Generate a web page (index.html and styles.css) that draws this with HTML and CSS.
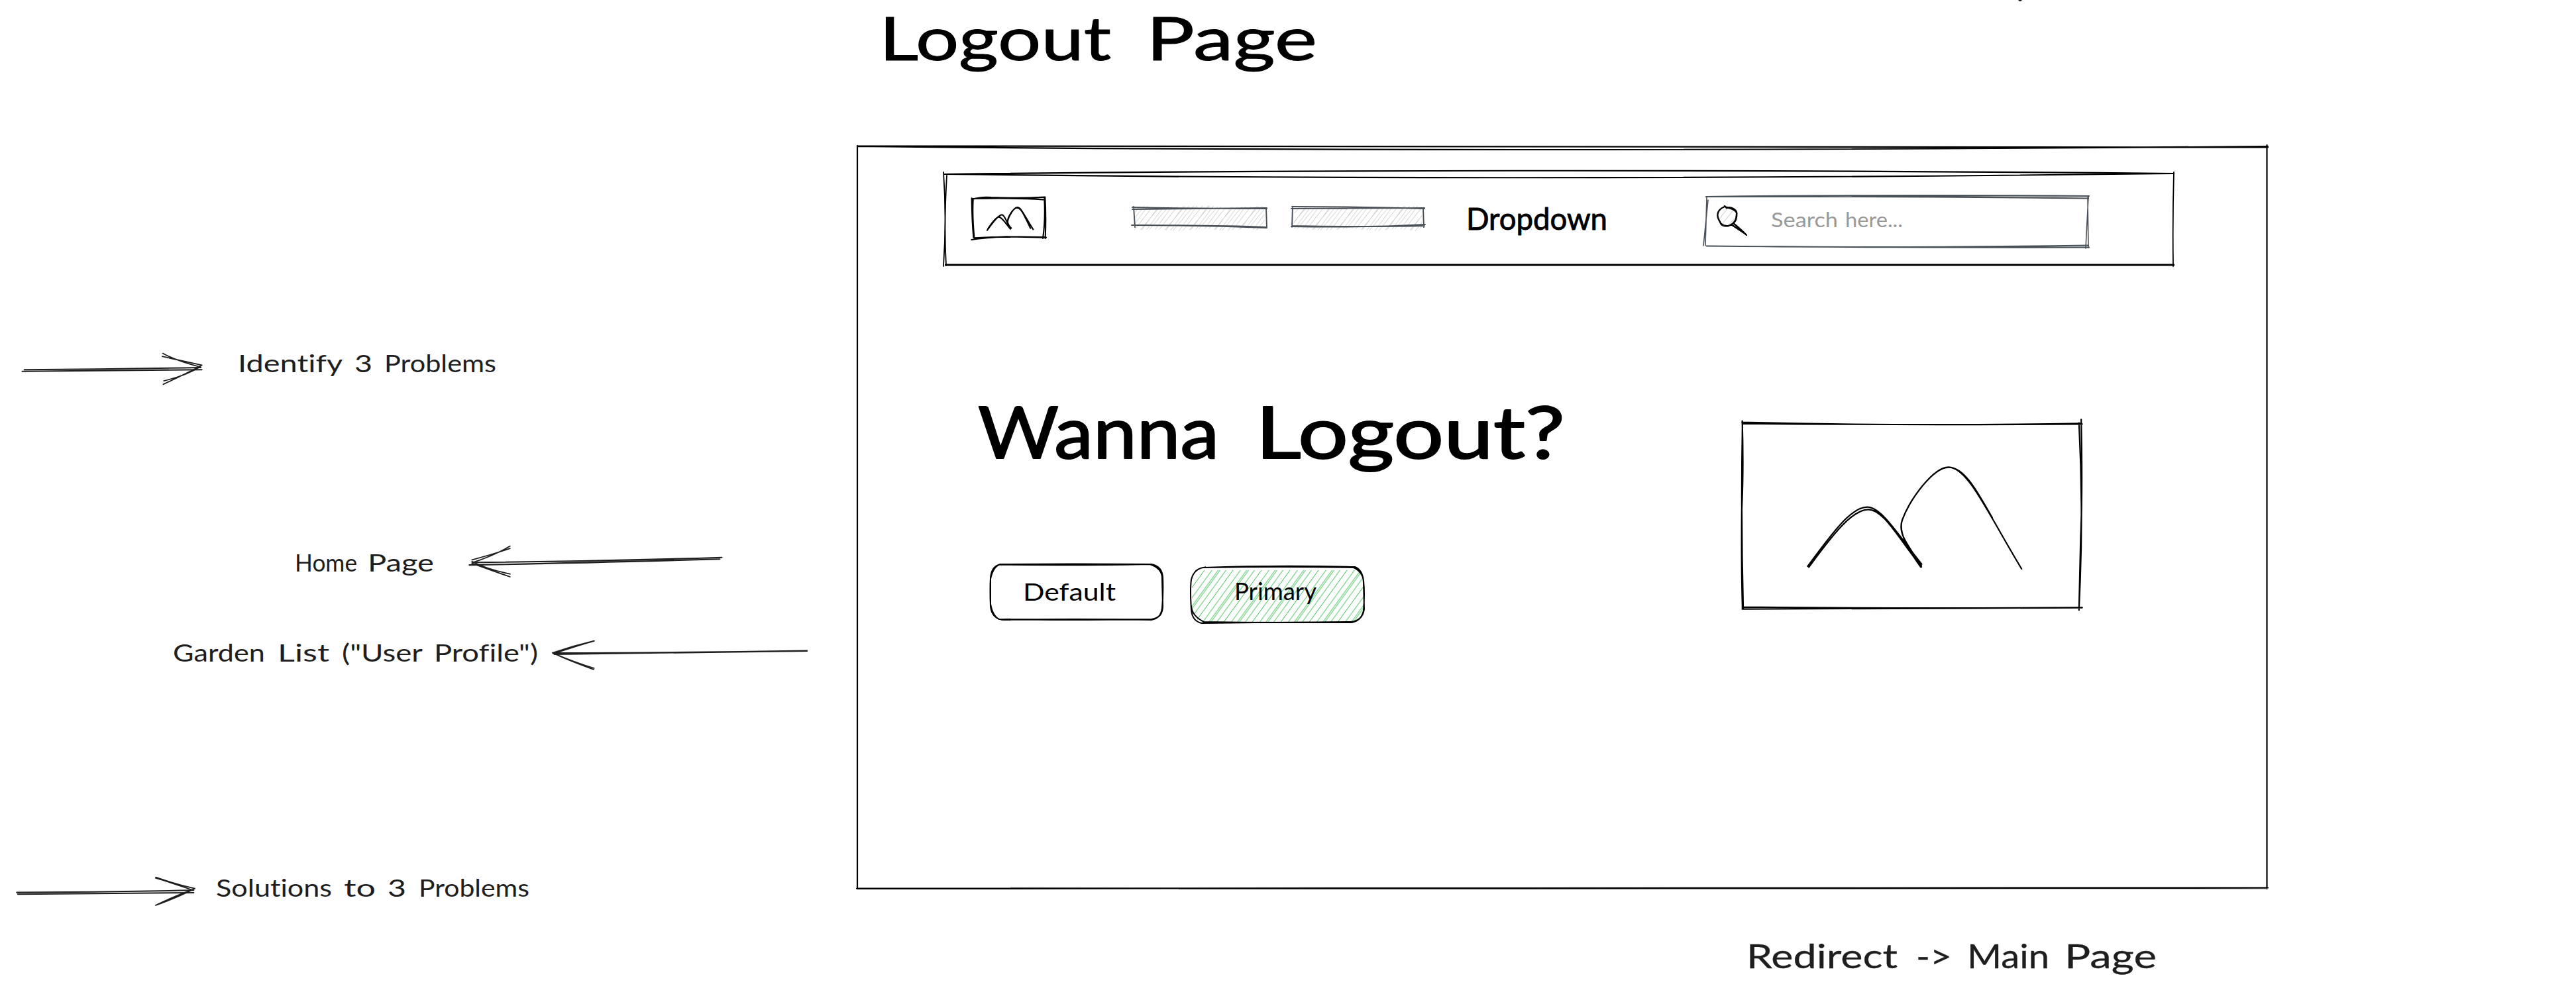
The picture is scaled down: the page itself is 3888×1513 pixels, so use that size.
FILE: index.html
```html
<!DOCTYPE html>
<html lang="en">
<head>
<meta charset="utf-8">
<title>Logout Page</title>
<link rel="stylesheet" href="styles.css">
</head>
<body>
<main class="board">
  <svg class="item speck" viewBox="0 0 8 3"><path d="M1 0H7L5 2H3Z"/></svg>

  <svg class="item title ink" viewBox="1320 0 680 140"><text y="91"><tspan x="1327" textLength="350" lengthAdjust="spacingAndGlyphs">Logout</tspan> <tspan x="1730" textLength="258" lengthAdjust="spacingAndGlyphs">Page</tspan></text></svg>

  <svg class="item arrow arrow-identify" viewBox="30 140 360 150" preserveAspectRatio="none">
    <path d="M42 226Q200 223 382 219M46 219Q220 216 380 210"/>
    <path class="thin" d="M308 150Q335 183 380 208M307 163Q340 179 382 200M309 281Q350 238 382 200M310 266Q350 246 378 208"/>
  </svg>
  <svg class="item label label-identify" viewBox="350 500 410 90"><text y="562"><tspan x="359" textLength="157" lengthAdjust="spacingAndGlyphs">Identify</tspan> <tspan x="535" textLength="27" lengthAdjust="spacingAndGlyphs">3</tspan> <tspan x="580" textLength="169" lengthAdjust="spacingAndGlyphs">Problems</tspan></text></svg>

  <svg class="item label label-home" viewBox="440 800 230 90"><text y="863"><tspan x="445" textLength="94" lengthAdjust="spacingAndGlyphs">Home</tspan> <tspan x="555" textLength="100" lengthAdjust="spacingAndGlyphs">Page</tspan></text></svg>
  <svg class="item arrow arrow-home" viewBox="880 955 500 150" preserveAspectRatio="none">
    <path d="M888 1045Q1100 1037 1362 1020M895 1034Q1130 1030 1366 1013"/>
    <path class="thin" d="M893 1023Q935 998 965 975M893 1036Q940 1000 965 965M893 1030Q920 1062 965 1083M893 1038Q930 1068 965 1095"/>
  </svg>

  <svg class="item label label-garden" viewBox="250 940 580 90"><text y="999"><tspan x="261" textLength="139" lengthAdjust="spacingAndGlyphs">Garden</tspan> <tspan x="419" textLength="78" lengthAdjust="spacingAndGlyphs">List</tspan> <tspan x="516" textLength="121" lengthAdjust="spacingAndGlyphs">("User</tspan> <tspan x="655" textLength="157" lengthAdjust="spacingAndGlyphs">Profile")</tspan></text></svg>
  <svg class="item arrow arrow-garden" viewBox="1040 1355 500 140" preserveAspectRatio="none">
    <path d="M1050 1422Q1280 1415 1528 1408M1052 1417Q1280 1416 1528 1407"/>
    <path class="thin" d="M1046 1416Q1085 1386 1125 1365M1048 1420Q1090 1388 1125 1366M1046 1416Q1090 1458 1125 1481M1050 1420Q1085 1456 1124 1486"/>
  </svg>

  <svg class="item arrow arrow-solutions" viewBox="20 365 350 145" preserveAspectRatio="none">
    <path d="M30 442Q190 440 352 432M32 450Q190 446 352 443"/>
    <path class="thin" d="M283 373Q320 405 354 424M283 377Q315 400 350 431M283 500Q325 462 354 424M285 497Q330 445 350 430"/>
  </svg>
  <svg class="item label label-solutions" viewBox="320 1290 490 90"><text y="1354"><tspan x="326" textLength="175" lengthAdjust="spacingAndGlyphs">Solutions</tspan> <tspan x="519" textLength="48" lengthAdjust="spacingAndGlyphs">to</tspan> <tspan x="585" textLength="28" lengthAdjust="spacingAndGlyphs">3</tspan> <tspan x="632" textLength="167" lengthAdjust="spacingAndGlyphs">Problems</tspan></text></svg>

  <section class="item frame">
    <svg class="outline" viewBox="1294 221 2128 1121">
      <path d="M1294 220.5Q2250 222 3423 222.500M1294 221Q2250 231 3423 221M3421.500 219V1342M3423 1340.500Q2300 1341 1293 1341.500M1294 1342Q2300 1341 3422 1341M1294 220V1342"/>
    </svg>
    <nav class="navbar">
      <svg class="outline" viewBox="1424 257 1857 146">
        <path d="M1425 263Q2280 253 3281 262M1426 263Q2280 274 3281 262M1427 399.500H3281M1427 400.500H3281"/>
        <path class="fine" d="M1424 260Q1429 330 1424 402M1429 265Q1424.500 340 1428 401M3281 260Q3279 330 3280 402"/>
      </svg>
      <svg class="logo" viewBox="130 165 360 210">
        <path d="M141 178Q142 280 149 355M147 185Q143 260 152 352M141 184Q180 170 230 174Q350 180 473 173M145 180Q330 176 465 184M473 175Q478 260 474 360M470 180Q475 280 463 360M140 366Q200 356 300 352L478 356M152 358Q300 350 472 354"/>
        <path d="M211 323Q260 253 278 253C292 253 300 298 320 313M214 317Q250 263 264 263C278 263 300 300 316 317M307 295C294 280 330 220 347 219C365 219 375 250 419 319M304 290C300 265 330 222 347 221C366 222 380 260 407 314"/>
      </svg>
      <svg class="link" viewBox="1700 308 220 44">
        <defs><pattern id="grey-hatch" width="37" height="60" patternUnits="userSpaceOnUse" patternTransform="skewX(-38)"><path d="M2 0L4 60M10 0L7 60M14 0L17 60M23 0L22 60M31 0L34 60M34 0L31 60"/></pattern></defs>
        <path class="hatch" d="M1713 313L1732 311L1735 313L1770 312L1820 310L1850 313L1908 311L1909 343L1897 348L1880 345L1850 349L1820 345L1780 349L1740 346L1712 348Z"/>
        <path d="M1709 313Q1800 315 1912 315M1709 316Q1800 315 1912 314M1711 312L1713 343M1911 314L1912 344M1708 340Q1810 340 1912 344M1710 340Q1840 340 1911 343"/>
      </svg>
      <svg class="link" viewBox="1940 308 220 44">
        <path class="hatch" d="M1955 313L1990 313L2030 311L2070 314L2110 311L2145 311L2147 343L2136 349L2110 345L2080 349L2040 345L2000 348L1952 345Z"/>
        <path d="M1950 312Q2050 312 2150 315M1949 315Q2060 314 2150 314M1951 312L1950 343M2148 314L2149 343M1949 342Q2060 344 2151 339M1950 341Q2060 343 2150 341"/>
      </svg>
      <svg class="dropdown ink" viewBox="2210 290 220 80"><text x="2213" y="347" textLength="213" lengthAdjust="spacingAndGlyphs">Dropdown</text></svg>
      <svg class="search" viewBox="2565 280 600 100">
        <path d="M2575 297Q2850 294 3153 296M2575 297Q2850 296 3152 299.500M2576 371.500Q2850 375 3152 370.500M2576 371.500Q2850 374 3153 373.500"/>
        <path class="fine" d="M2576 297L2574 371M2578 302Q2574 340 2571 371M3152 297L3148 375M3151 298L3152 374"/>
        <path class="glass-hatch" d="M2607 315L2594 332M2617 316L2598 340M2621 327L2608 341"/>
        <path class="glass" d="M2603 311L2606 314C2614 311 2623 318 2621 324L2620 332Q2617 338 2612 340C2604 343 2598 341 2596 335C2590 326 2591 317 2603 312M2606 313Q2619 316 2621 321Q2623 335 2609 341Q2602 342 2598 338M2613 339L2634 353M2616 337Q2625 344 2636 355"/>
        <text y="342.500"><tspan x="2673" textLength="101" lengthAdjust="spacingAndGlyphs">Search</tspan> <tspan x="2785" textLength="87" lengthAdjust="spacingAndGlyphs">here...</tspan></text>
      </svg>
    </nav>
    <div class="hero">
      <div class="prompt">
        <svg class="heading ink" viewBox="1470 600 900 150"><text y="692"><tspan x="1476" textLength="364" lengthAdjust="spacingAndGlyphs">Wanna</tspan> <tspan x="1895" textLength="467" lengthAdjust="spacingAndGlyphs">Logout?</tspan></text></svg>
        <div class="actions">
          <svg class="button ink" viewBox="1485 845 280 100">
            <path d="M1512 852Q1620 851 1738 852Q1754 855 1755 872Q1756 895 1754 918Q1752 934 1738 936Q1620 934 1512 936Q1497 933 1495 916Q1494 890 1495 872Q1497 853 1512 852ZM1508 852.500Q1650 854 1735 852Q1755 858 1754 875L1755 915Q1755 933 1738 935Q1600 937 1508 935Q1498 930 1495 912V874Q1500 851 1514 852"/>
            <text x="1544" y="907" textLength="140" lengthAdjust="spacingAndGlyphs">Default</text>
          </svg>
          <svg class="button ink" viewBox="1787 845 280 100">
            <defs><pattern id="green-hatch" width="43" height="1000" patternUnits="userSpaceOnUse" patternTransform="skewX(-36)"><path d="M3 0L4 1000M14 0L13 1000M16 0V1000M25 0V1000M36 0L35.500 1000"/></pattern></defs>
            <path class="green" d="M1814 861H2052L2058 880V915Q2055 936 2042 941H1815Q1801 935 1799 918V882Z"/>
            <path d="M1818 857Q1925 853 2045 856Q2056 860 2058 877Q2060 895 2058 922Q2055 937 2040 940Q1940 939 1814 941Q1799 938 1798 920Q1796 890 1798 875Q1803 857 1820 856.500ZM1818 857Q1930 855 2043 857Q2058 864 2058 880L2059 920Q2056 938 2038 939Q1930 941 1817 939Q1799 930 1798 915"/>
            <text x="1863" y="906" textLength="124" lengthAdjust="spacingAndGlyphs">Primary</text>
          </svg>
        </div>
      </div>
      <svg class="picture" viewBox="0 0 1568 1020" preserveAspectRatio="none">
        <path d="M79 83Q750 101 1460 88M83 89Q780 96 1467 91M80 77Q86 300 78 480Q76 750 81 929M81 80Q74 500 84 927M1463 70Q1469 400 1461 600L1454 934M1454 86Q1471 450 1459 800L1454 930M80 920Q780 927 1467 922M80 929Q700 923 1467 923"/>
        <path d="M347 735C450 580 525 467 590 467C650 467 720 600 812 725M352 739C450 590 530 478 594 478C655 478 710 595 811 738M811 732C745 625 715 580 733 525C765 430 860 286 922 286C1000 286 1080 490 1220 747M808 738C745 640 718 575 733 525C765 428 860 288 922 287C990 287 1045 410 1100 515M757 650L811 738"/>
      </svg>
    </div>
  </section>

  <svg class="item redirect" viewBox="2630 1400 640 100"><text y="1462"><tspan x="2636" textLength="228" lengthAdjust="spacingAndGlyphs">Redirect</tspan> <tspan x="2892" textLength="54" lengthAdjust="spacingAndGlyphs">-&gt;</tspan> <tspan x="2969" textLength="124" lengthAdjust="spacingAndGlyphs">Main</tspan> <tspan x="3116" textLength="139" lengthAdjust="spacingAndGlyphs">Page</tspan></text></svg>
</main>
</body>
</html>
```
FILE: styles.css
```css
* { box-sizing: border-box; }
body {
  margin: 0;
  background: #fff;
  font-family: Lato, "Open Sans", sans-serif;
  font-variant-ligatures: none;
}
.board {
  position: relative;
  width: 3888px;
  height: 1513px;
  overflow: hidden;
}
svg {
  display: block;
  flex: none;
  overflow: visible;
}
text {
  fill: #1e1e1e;
  stroke: #1e1e1e;
  stroke-width: 0;
  stroke-linejoin: round;
}
path {
  fill: none;
  stroke: #000;
  stroke-width: 2.2px;
  stroke-linecap: round;
  vector-effect: non-scaling-stroke;
}
.ink text { fill: #000; stroke: #000; }
.fine { stroke-width: 1.8px; }

/* Notes and arrows placed freely on the board */
.item { position: absolute; }
.speck { left: 3045px; top: 0; width: 8px; height: 3px; }
.speck path { fill: #1e1e1e; stroke: none; }
.title { left: 1320px; top: 0; width: 680px; height: 140px; font-size: 92px; }
.title text { stroke-width: 1px; }
.redirect { left: 2630px; top: 1400px; width: 640px; height: 100px; font-size: 51px; }
.redirect text { stroke-width: .3px; }
.label { font-size: 37px; height: 90px; }
.label-identify { left: 350px; top: 500px; width: 410px; }
.label-home { left: 440px; top: 800px; width: 230px; }
.label-garden { left: 250px; top: 940px; width: 580px; }
.label-solutions { left: 320px; top: 1290px; width: 490px; }
.arrow path { stroke: #1e1e1e; stroke-width: 2.1px; }
.arrow .thin { stroke-width: 1.8px; }
.arrow-identify { left: 24px; top: 530px; width: 287px; height: 53.600px; }
.arrow-home { left: 702px; top: 821px; width: 398.700px; height: 53.600px; }
.arrow-garden { left: 829px; top: 964px; width: 398.700px; height: 50px; }
.arrow-solutions { left: 16.600px; top: 1321.700px; width: 290.200px; height: 48.300px; }

/* Wireframe */
.frame {
  left: 1294px;
  top: 221px;
  width: 2128px;
  height: 1121px;
  padding-top: 36px;
}
.outline {
  position: absolute;
  inset: 0;
  width: 100%;
  height: 100%;
}
.navbar {
  position: relative;
  display: flex;
  align-items: center;
  width: 1857px;
  height: 146px;
  margin-left: 130px;
  padding-left: 39px;
}
.logo { width: 120px; height: 70px; margin-right: 117px; }
.logo path { stroke-width: 2.1px; }
.link { width: 220px; height: 44px; margin-right: 20px; }
.link path { stroke: #495057; stroke-width: 1.9px; }
.link .hatch { fill: url(#grey-hatch); stroke: none; }
#grey-hatch path { stroke: #bfc1c3; stroke-width: .8px; vector-effect: none; }
.dropdown { width: 220px; height: 80px; margin: 0 135px 0 30px; font-size: 47px; }
.dropdown text { stroke-width: .9px; }
.search { width: 600px; height: 100px; font-size: 30px; }
.search path { stroke: #495057; }
.search .fine { stroke-width: 1.6px; }
.search .glass { stroke: #000; stroke-width: 2.4px; }
.search .glass-hatch { stroke: #ced4da; stroke-width: 1.2px; }
.search text { fill: #999; stroke: #999; }

.hero {
  display: flex;
  align-items: flex-start;
  padding: 197px 0 0 176px;
}
.prompt { width: 900px; }
.heading { width: 900px; height: 150px; font-size: 109px; }
.heading text { stroke-width: 2px; }
.actions {
  display: flex;
  gap: 22px;
  padding: 95px 0 0 15px;
}
.button { width: 280px; height: 100px; font-size: 37px; }
.button path { stroke-width: 2px; }
.button .green { fill: url(#green-hatch); stroke: none; }
.button #green-hatch path { stroke: #40c057; stroke-width: 1.1px; vector-effect: none; }
.picture { width: 580px; height: 340px; margin: 10px 0 0 230px; }
```
